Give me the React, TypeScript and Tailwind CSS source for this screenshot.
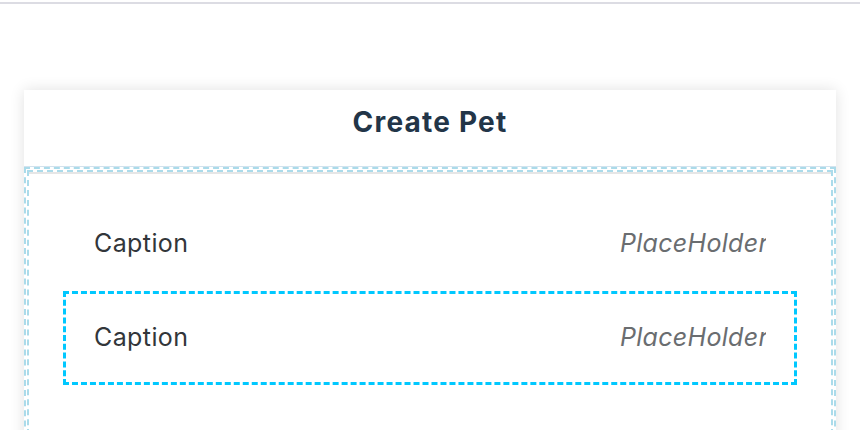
function FieldRow({ focused }: { focused?: boolean }) {
  return (
    <div
      className={
        "flex h-[94px] items-center justify-between border-[3px] border-dashed pl-[28px] pr-[28px] " +
        (focused ? "border-[#00c8ff]" : "border-transparent")
      }
    >
      <span className="text-[25px] tracking-[0.4px] text-[#32363a]">Caption</span>
      <span className="w-[146px] overflow-hidden whitespace-nowrap text-[25px] italic tracking-[0.3px] text-[#6a6d70]">
        PlaceHolder
      </span>
    </div>
  );
}

export default function App() {
  return (
    <div
      className="h-[430px] overflow-hidden bg-white"
      style={{ fontFamily: "Inter, 'Noto Sans', sans-serif" }}
    >
      <div className="mt-[2px] h-[2px] bg-[#dcdce3]" />
      <div className="mx-[24px] mt-[86px] bg-white shadow-[0_0_14px_rgba(0,0,0,0.12)]">
        <header className="flex h-[77px] items-center justify-center border-b border-[#d3e3ee] pb-[12px]">
          <h1 className="text-[28px] font-bold tracking-[1.2px] text-[#223548]">Create Pet</h1>
        </header>
        <div className="h-[300px] border-2 border-dashed border-[#abdbea] pt-[1px] pl-px pr-px">
          <div className="h-full border-2 border-dashed border-[#abdbea]">
            <div className="h-full border-t-2 border-[#e6e6e6] px-[34px] pt-[23px]">
              <FieldRow />
              <FieldRow focused />
            </div>
          </div>
        </div>
      </div>
    </div>
  );
}
